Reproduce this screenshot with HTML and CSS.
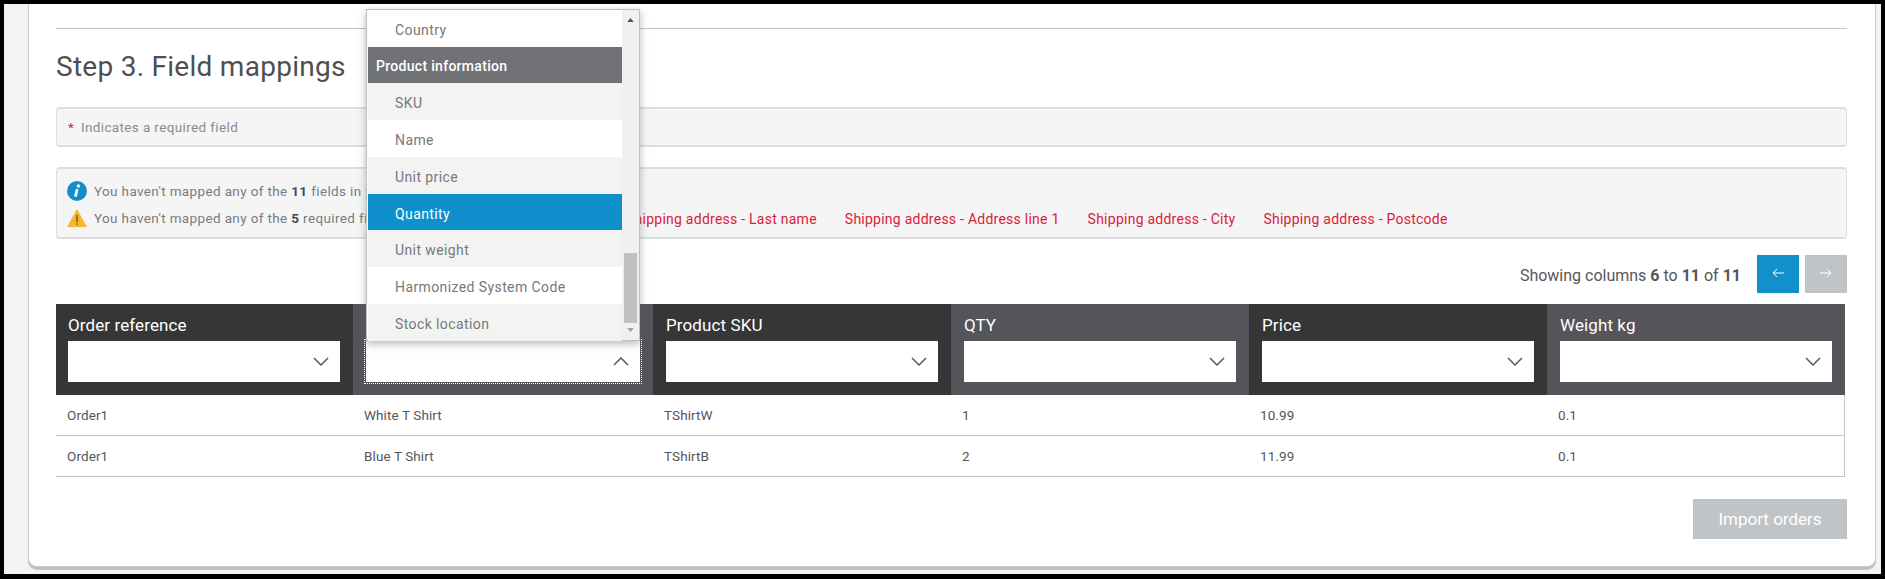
FILE: index.html
```html
<!DOCTYPE html>
<html lang="en">
<head>
<meta charset="utf-8">
<title>Step 3. Field mappings</title>
<link rel="stylesheet" href="styles.css">
</head>
<body>
<div class="page">
  <main class="card">
    <hr class="divider">
    <h2 class="title">Step 3. Field mappings</h2>
    <div class="panel required-note"><span class="star">*</span> Indicates a required field</div>
    <div class="panel messages">
      <div class="msg">
        <svg class="msg-icon" viewBox="0 0 20 20" aria-hidden="true"><circle cx="10" cy="10" r="10" fill="#148dcb"/><circle cx="11.4" cy="5" r="1.7" fill="#fff"/><path d="M10.2 8.2 8.4 15.6" stroke="#fff" stroke-width="2.8" fill="none"/></svg>
        <span>You haven't mapped any of the <b>11</b> fields in your file.</span>
      </div>
      <div class="msg">
        <svg class="msg-icon" viewBox="0 0 20 18" aria-hidden="true"><path d="M10 0 20 18H0Z" fill="#f5b72d"/><path d="M10 6v7" stroke="#5a4a20" stroke-width="1.3"/><circle cx="10" cy="15" r=".8" fill="#5a4a20"/></svg>
        <span class="msg-label">You haven't mapped any of the <b>5</b> required fields:</span>
        <span class="missing">Shipping address - Last name</span>
        <span class="missing">Shipping address - Address line 1</span>
        <span class="missing">Shipping address - City</span>
        <span class="missing">Shipping address - Postcode</span>
      </div>
    </div>
    <div class="pager">
      <span class="pager-text">Showing columns <b>6</b> to <b>11</b> of <b>11</b></span>
      <button class="page-btn active" aria-label="Previous"><svg viewBox="0 0 12 10"><path d="M12 5H1M5 1 1 5l4 4" fill="none" stroke="#fff" stroke-width="1"/></svg></button>
      <button class="page-btn" aria-label="Next"><svg viewBox="0 0 12 10"><path d="M0 5h11M7 1l4 4-4 4" fill="none" stroke="#fff" stroke-width="1"/></svg></button>
    </div>
    <table class="map">
      <thead>
        <tr>
          <th><span class="col-name">Order reference</span><div class="pick"><svg class="chev" viewBox="0 0 16 9"><path d="M1 1l7 7 7-7" fill="none" stroke="#5b6066" stroke-width="1.6"/></svg></div></th>
          <th><span class="col-name">&nbsp;</span><div class="pick focused"><svg class="chev" viewBox="0 0 16 9"><path d="M1 8l7-7 7 7" fill="none" stroke="#5b6066" stroke-width="1.6"/></svg></div></th>
          <th><span class="col-name">Product SKU</span><div class="pick"><svg class="chev" viewBox="0 0 16 9"><path d="M1 1l7 7 7-7" fill="none" stroke="#5b6066" stroke-width="1.6"/></svg></div></th>
          <th><span class="col-name">QTY</span><div class="pick"><svg class="chev" viewBox="0 0 16 9"><path d="M1 1l7 7 7-7" fill="none" stroke="#5b6066" stroke-width="1.6"/></svg></div></th>
          <th><span class="col-name">Price</span><div class="pick"><svg class="chev" viewBox="0 0 16 9"><path d="M1 1l7 7 7-7" fill="none" stroke="#5b6066" stroke-width="1.6"/></svg></div></th>
          <th><span class="col-name">Weight kg</span><div class="pick"><svg class="chev" viewBox="0 0 16 9"><path d="M1 1l7 7 7-7" fill="none" stroke="#5b6066" stroke-width="1.6"/></svg></div></th>
        </tr>
      </thead>
      <tbody>
        <tr><td>Order1</td><td>White T Shirt</td><td>TShirtW</td><td>1</td><td>10.99</td><td>0.1</td></tr>
        <tr><td>Order1</td><td>Blue T Shirt</td><td>TShirtB</td><td>2</td><td>11.99</td><td>0.1</td></tr>
      </tbody>
    </table>
    <div class="actions"><button class="import">Import orders</button></div>
  </main>
</div>
<div class="menu">
  <ul class="menu-list">
    <li class="item first">Country</li>
    <li class="group">Product information</li>
    <li class="item alt">SKU</li>
    <li class="item">Name</li>
    <li class="item alt">Unit price</li>
    <li class="item selected">Quantity</li>
    <li class="item alt">Unit weight</li>
    <li class="item">Harmonized System Code</li>
    <li class="item alt">Stock location</li>
  </ul>
  <div class="scroll">
    <svg class="scroll-arrow" viewBox="0 0 8 5"><path d="M4 0l4 5H0Z" fill="#505050"/></svg>
    <div class="thumb"></div>
    <svg class="scroll-arrow" viewBox="0 0 8 5"><path d="M0 0h8L4 5Z" fill="#a0a0a0"/></svg>
  </div>
</div>
</body>
</html>
```
FILE: styles.css
```css
* { box-sizing: border-box; }
html, body { margin: 0; height: 579px; overflow: hidden; }
body {
  background: #000;
  padding: 4px 4px 5px;
  font-family: Roboto, "Open Sans", sans-serif;
  color: #55565b;
  font-size: 14px;
}
.page {
  height: 570px;
  background: #f3f3f1;
  padding: 0 5px 0 24px;
  overflow: hidden;
}
.card {
  height: 563px;
  background: #fff;
  border: 1px solid #c8cccc;
  border-width: 0 1px 1px;
  border-radius: 0 0 9px 9px;
  box-shadow: 0 3px 1px #bcc1c3;
  padding: 24px 28px 0 27px;
}
.divider { margin: 0; border: 0; border-top: 1px solid #c4c4c4; }
.title {
  margin: 0;
  height: 78px;
  padding-top: 20px;
  font-size: 28px;
  line-height: 36px;
  font-weight: 400;
  letter-spacing: .27px;
  color: #4e4f53;
}
.panel {
  background: #f5f5f5;
  border: 1px solid #dedede;
  border-width: 2px 1px;
  border-radius: 4px;
}
.required-note {
  height: 40px;
  line-height: 36px;
  padding-left: 11px;
  color: #8c8c8c;
  font-size: 13.5px;
  letter-spacing: .37px;
}
.star { color: #d8203a; margin-right: 3px; }
.messages {
  margin-top: 20px;
  height: 72px;
  padding: 12px 10px 0;
  display: flex;
  flex-direction: column;
  gap: 7px;
}
.msg { display: flex; align-items: center; height: 20px; white-space: nowrap; color: #7a7b7e; font-size: 13.5px; letter-spacing: .36px; }
.msg b { color: #4a4b4f; }
.msg-icon { width: 20px; height: 20px; margin-right: 7px; flex: none; }
.msg-label { width: 532px; flex: none; }
.missing { color: #d8203a; margin-right: 28px; font-size: 14px; letter-spacing: .25px; padding-top: 2px; }
.pager { display: flex; align-items: center; justify-content: flex-end; margin-top: 16px; height: 38px; }
.pager-text { font-size: 16px; margin-right: 16px; padding-top: 3px; color: #55565b; }
.page-btn {
  width: 42px; height: 38px; border: 0; padding: 0 0 3px; background: #c0c4c6;
  margin-left: 6px; display: flex; align-items: center; justify-content: center;
}
.page-btn.active { background: #1190cc; margin-left: 0; }
.page-btn svg { width: 12px; height: 10px; }
.map { margin-top: 11px; width: 1789px; table-layout: fixed; border-collapse: separate; border-spacing: 0; }
.map th { width: 298px; height: 91px; padding: 10px 13px 13px; text-align: left; vertical-align: top; background: #363636; font-weight: 400; color: #fff; }
.map th:first-child { width: 297px; padding-left: 12px; }
.map th:nth-child(2) { width: 300px; }
.map th:nth-child(even) { background: #55545a; }
.col-name { display: block; font-size: 17px; line-height: 20px; margin-top: 1px; margin-bottom: 6px; letter-spacing: .1px; }
.pick { height: 41px; background: #fff; display: flex; align-items: center; justify-content: flex-end; padding-right: 11px; }
.pick.focused { outline: 1px dotted #fff; outline-offset: 1px; }
.chev { width: 16px; height: 9px; }
.map td { height: 41px; padding: 0 11px; font-size: 13.5px; letter-spacing: .1px; color: #55565b; border-bottom: 1px solid #c4c4c4; }
.map td:last-child { border-right: 1px solid #c4c4c4; }
.actions { display: flex; justify-content: flex-end; margin-top: 22px; }
.import { width: 154px; height: 40px; border: 0; background: #c0c4c6; color: #fff; font: 400 17px Roboto, sans-serif; }
.menu {
  position: absolute; left: 366px; top: 9px; width: 274px; height: 332px;
  display: flex; background: #fff; border: 1px solid #bbbfc0;
  box-shadow: 0 3px 8px rgba(90,100,105,.45); padding-left: 1px;
}
.menu-list { list-style: none; margin: 0; padding: 0; width: 254px; flex: none; }
.item { height: 37px; line-height: 40px; padding-left: 27px; color: #77787b; font-size: 14px; letter-spacing: .4px; background: #fff; }
.item.alt { background: #f3f3f1; }
.item.selected { height: 36px; line-height: 40px; background: #0f8fcb; color: #fff; }
.group { height: 36px; line-height: 39px; padding-left: 8px; background: #707276; color: #fff; font-size: 14px; font-weight: 500; letter-spacing: .3px; }
.scroll { flex: 1; background: #f0f0f0; display: flex; flex-direction: column; align-items: center; padding: 8px 0 6px; }
.scroll-arrow { width: 7px; height: 4px; flex: none; }
.thumb { width: 13px; height: 70px; margin-top: 231px; margin-bottom: 5px; background: #c0c0c0; }
```
